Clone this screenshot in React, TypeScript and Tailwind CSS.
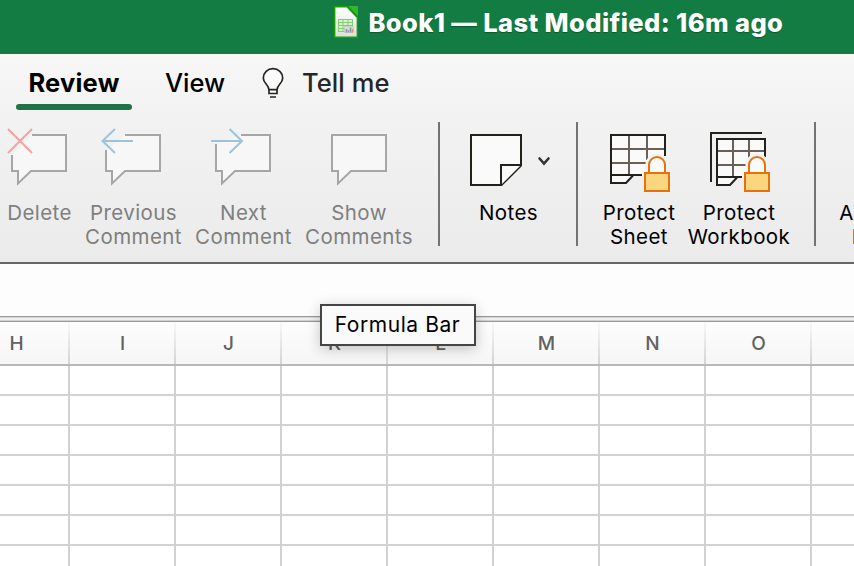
import type { ReactNode } from 'react';

const columns = ['H', 'I', 'J', 'K', 'L', 'M', 'N', 'O', 'P'];
const rows = [0, 1, 2, 3, 4, 5, 6];

function SheetFileIcon() {
  return (
    <svg width="24" height="32" viewBox="334 6 24 32" className="shrink-0">
      <defs>
        <linearGradient id="paper" x1="0" y1="0" x2="0" y2="1">
          <stop offset="0" stopColor="#ffffff" />
          <stop offset="1" stopColor="#dedede" />
        </linearGradient>
      </defs>
      <path d="M334.700 6.700H347L357.300 17.500V37.300H334.700Z" fill="url(#paper)" stroke="#18a303" strokeWidth="1.4" />
      <path d="M348 6H358V16Z" fill="#35b729" />
      <rect x="338" y="19" width="15" height="13" fill="#d9f2d0" />
      <path d="M338 19.500H353M338 22.500H353M338 25.500H353M338 28.500H353M338 31.500H353M338.500 19V32M343 19V32M348 19V32M352.500 19V32" stroke="#83cf70" strokeWidth="1" />
      <rect x="344.500" y="26.500" width="9" height="6" fill="#dcdcdc" stroke="#c4c4c4" strokeWidth=".6" />
      <path d="M346.500 29V32.500M350.500 27.500V32.500" stroke="#6a9fd0" strokeWidth="1.6" />
      <path d="M348.500 30V32.500M352.500 29V32.500" stroke="#e58b5c" strokeWidth="1.4" />
    </svg>
  );
}

function Tool({ width, art, lines, disabled = false }: { width: string; art: ReactNode; lines: string[]; disabled?: boolean }) {
  return (
    <div className={`${width} flex shrink-0 flex-col items-center ${disabled ? 'text-[#7f7f7f]' : 'text-black'}`}>
      {art}
      <div className="mt-[5px] pl-px text-center text-[20.5px] leading-6 tracking-[0.42px] whitespace-nowrap">
        {lines.map((line) => (
          <div key={line}>{line}</div>
        ))}
      </div>
    </div>
  );
}

function Lock({ x }: { x: number }) {
  return (
    <g>
      <path d={`M${x + 5} 172V165A8 8 0 0 1 ${x + 21} 165V172`} fill="#fafafa" stroke="#f2f2f2" strokeWidth="7" />
      <path d={`M${x + 5} 173V165A8 8 0 0 1 ${x + 21} 165V173`} fill="#fafafa" stroke="#e8710a" strokeWidth="2" />
      <rect x={x + 1} y="173" width="24" height="18" fill="#fad67e" stroke="#e8710a" strokeWidth="2" />
    </g>
  );
}

function Divider() {
  return <div className="h-[124px] w-[2px] shrink-0 bg-[#737373]" />;
}

export default function App() {
  return (
    <div className="relative flex h-[566px] w-[854px] flex-col overflow-hidden bg-white font-['Inter',sans-serif]">
      <header className="flex h-[54px] shrink-0 bg-[#127c42] pt-[6px] pl-[334px]">
        <SheetFileIcon />
        <div className="ml-[10.5px] text-[25.5px] leading-[34px] font-extrabold tracking-[0.4px] whitespace-nowrap text-white [text-shadow:0_1px_1px_rgba(0,0,0,0.3)]">
          Book1 — Last Modified: 16m ago
        </div>
      </header>

      <nav className="flex h-[66px] shrink-0 bg-linear-to-b from-[#f8f7f8] to-[#f2f2f2] text-[25.5px] leading-8">
        <div className="ml-4 flex w-[116px] flex-col items-center pt-[13px]">
          <span className="font-bold tracking-[0.2px]">Review</span>
          <span className="mt-[5px] h-[6px] w-full rounded-full bg-[#217346]" />
        </div>
        <div className="ml-[33px] w-[60px] pt-[13px] font-medium">View</div>
        <svg width="26" height="34" viewBox="260 66 26 34" className="mt-3 ml-[35px] shrink-0" fill="none" stroke="#252520" strokeWidth="1.7">
          <path d="M269 90C269 84.500 263.300 83.500 263.300 78A9.700 9.300 0 0 1 282.700 78C282.700 83.500 277 84.500 277 90V93.500H269Z" fill="#fcfcfc" />
          <path d="M269 89.700H277M270 97H276" />
        </svg>
        <div className="ml-[16px] pt-[13px] font-medium tracking-[0.1px] whitespace-nowrap text-[#262626]">Tell me</div>
      </nav>

      <section className="flex h-[144px] shrink-0 overflow-hidden border-b-2 border-[#666] bg-linear-to-b from-[#f2f2f2] to-[#ebebeb] pt-[2px]">
        <Tool
          width="w-[78px]"
          disabled
          lines={['Delete']}
          art={
            <svg width="78" height="74" viewBox="0 122 78 74" fill="none" strokeWidth="2">
              <path d="M32 135H66V171H31L18 183.500V171H12V155" fill="#f7f7f7" stroke="#a6a6a4" />
              <path d="M8 129L32 153M32 129L8 153" stroke="#f4a3a3" />
            </svg>
          }
        />
        <Tool
          width="w-[110px]"
          disabled
          lines={['Previous', 'Comment']}
          art={
            <svg width="110" height="74" viewBox="78 122 110 74" fill="none" strokeWidth="2">
              <path d="M125 135H160V171H125L112 183.500V171H106V150" fill="#f7f7f7" stroke="#a6a6a4" />
              <path d="M133 141H102M115 129L102.500 141L115 153" stroke="#9dc3dc" />
            </svg>
          }
        />
        <Tool
          width="w-[110px]"
          disabled
          lines={['Next', 'Comment']}
          art={
            <svg width="110" height="74" viewBox="188 122 110 74" fill="none" strokeWidth="2">
              <path d="M241 135H270V171H235L222 183.500V171H216V144" fill="#f7f7f7" stroke="#a6a6a4" />
              <path d="M211 141H242M229.500 129L242 141L229.500 153" stroke="#9dc3dc" />
            </svg>
          }
        />
        <Tool
          width="w-[121px]"
          disabled
          lines={['Show', 'Comments']}
          art={
            <svg width="121" height="74" viewBox="298 122 121 74" fill="none" strokeWidth="2">
              <path d="M332 135H386V171H351L338 183.500V171H332Z" fill="#f7f7f7" stroke="#a6a6a4" />
            </svg>
          }
        />
        <div className="w-[19px] shrink-0" />
        <Divider />
        <Tool
          width="w-[136px]"
          lines={['Notes']}
          art={
            <svg width="136" height="74" viewBox="440 122 136 74" fill="#fafafa" stroke="#22221d" strokeWidth="2">
              <path d="M471 135H521V165.500L501.500 185H471Z" />
              <path d="M501 185V165H521" />
              <path d="M539.500 158.500L544 163.500L548.500 158.500" fill="none" stroke="#333" strokeWidth="2.600" strokeLinecap="round" />
            </svg>
          }
        />
        <Divider />
        <div className="w-[12px] shrink-0" />
        <Tool
          width="w-[97px]"
          lines={['Protect', 'Sheet']}
          art={
            <svg width="97" height="74" viewBox="590 122 97 74" fill="none" strokeWidth="2">
              <path d="M611 135H665V175H633L626 183H611Z" fill="#fafafa" />
              <path d="M629 136V174M647 136V160M612 149H664M612 163H647" stroke="#6b6058" />
              <path d="M665 156V135H611V183H626L633 175.500M611 175H642" stroke="#22221d" />
              <Lock x={644} />
            </svg>
          }
        />
        <Tool
          width="w-[103px]"
          lines={['Protect', 'Workbook']}
          art={
            <svg width="103" height="74" viewBox="687 122 103 74" fill="none" strokeWidth="2">
              <path d="M717 139H765V177H737L730 185H717Z" fill="#fafafa" />
              <path d="M733 140V176M749 140V160M718 151H764M718 165H747" stroke="#6b6058" />
              <path d="M711 182V133H762M765 157V139H717V185H730L737 177.500M717 177H742" stroke="#22221d" />
              <Lock x={744} />
            </svg>
          }
        />
        <div className="w-6 shrink-0" />
        <Divider />
        <Tool width="w-[145px]" lines={['Allow Edit', 'Ranges']} art={<div className="h-[74px] shrink-0" />} />
      </section>

      <div className="h-[52px] shrink-0 bg-[#fdfdfd]" />
      <div className="h-[6px] shrink-0 border-t border-b border-[#999] bg-linear-to-b from-[#c8c8c8] via-white to-[#c0c0c0]" />

      <div className="flex h-[44px] shrink-0 border-b-2 border-[#b8b8b8] bg-linear-to-b from-[#fdfdfd] to-[#f6f6f6]">
        <div className="-ml-[36px] flex">
          {columns.map((name) => (
            <div key={name} className="flex h-[42px] w-[106px] shrink-0">
              <div className="flex flex-1 items-center justify-center pt-[3px] pl-[1px] text-[19px] font-medium text-[#616161]">{name}</div>
              <div className="w-[2px] bg-linear-to-b from-[#f8f8f8] to-[#d4d4d4]" />
            </div>
          ))}
        </div>
      </div>
      {rows.map((row) => (
        <div key={row} className="flex h-[30px] shrink-0 border-b-2 border-[#d2d2d2]">
          <div className="-ml-[36px] flex">
            {columns.map((name) => (
              <div key={name} className="w-[106px] shrink-0 border-r-2 border-[#d2d2d2]" />
            ))}
          </div>
        </div>
      ))}

      <div className="absolute top-[304px] left-[320px] flex h-[42px] w-[156px] items-center justify-center border-2 border-[#454545] bg-[#fafafa] pr-px text-[21px] tracking-[0.55px] whitespace-nowrap shadow-[0_3px_14px_rgba(0,0,0,0.22)]">
        Formula Bar
      </div>
    </div>
  );
}
